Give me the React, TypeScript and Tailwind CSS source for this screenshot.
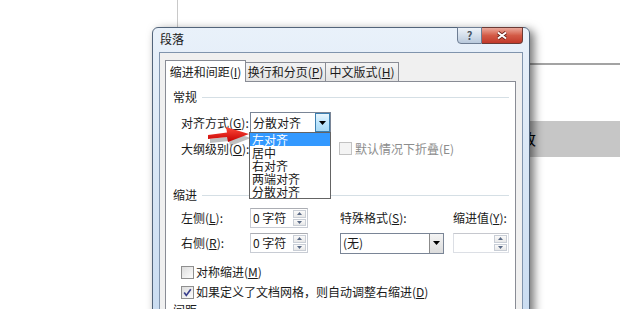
import type { ReactNode } from "react";

function K({ k }: { k: string }) {
  return <span className="underline underline-offset-[1px]">{k}</span>;
}

function GroupHeader({ title }: { title: string }) {
  return (
    <div className="flex h-[16px] items-center gap-[5px] pl-[7px] pr-[6px]">
      <span>{title}</span>
      <div className="h-px flex-1 bg-[#d5dfe5]" />
    </div>
  );
}

function DownTriangle() {
  return (
    <svg width="7" height="4" viewBox="0 0 7 4">
      <polygon points="0,0 7,0 3.5,4" fill="#000" />
    </svg>
  );
}

function Combo({
  value,
  hot,
  className,
  children,
}: {
  value?: string;
  hot?: boolean;
  className: string;
  children?: ReactNode;
}) {
  return (
    <div
      className={`relative flex h-[21px] items-stretch border border-[#7a8596] bg-white ${className}`}
    >
      <span className="flex-1 self-center pl-[2px]">{value}</span>
      <div
        className={
          hot
            ? "flex w-[15px] items-center justify-center border border-[#3c7fb1] bg-gradient-to-b from-[#eaf6fd] via-[#bee6fd] to-[#a7d9f5]"
            : "flex w-[14px] items-center justify-center border-l border-[#8b8b8b] bg-gradient-to-b from-[#f4f4f4] to-[#dcdcdc]"
        }
      >
        <DownTriangle />
      </div>
      {children}
    </div>
  );
}

function SpinArrow({ up }: { up?: boolean }) {
  return (
    <svg width="5" height="3" viewBox="0 0 5 3">
      <polygon points={up ? "0,3 5,3 2.5,0" : "0,0 5,0 2.5,3"} fill="#5a6a86" />
    </svg>
  );
}

function Spin({ value, className }: { value?: string; className: string }) {
  return (
    <div
      className={`flex h-[20px] items-stretch border border-[#c8ccd4] border-t-[#abadb3] bg-white ${className}`}
    >
      <span className="flex-1 self-center pl-[2px]">{value}</span>
      <div className="flex w-[15px] flex-col gap-px p-px">
        <div className="flex flex-1 items-center justify-center border border-[#c9ced6] bg-gradient-to-b from-[#fafafa] to-[#e8e8e8]">
          <SpinArrow up />
        </div>
        <div className="flex flex-1 items-center justify-center border border-[#c9ced6] bg-gradient-to-b from-[#fafafa] to-[#e8e8e8]">
          <SpinArrow />
        </div>
      </div>
    </div>
  );
}

function Checkbox({ checked, disabled }: { checked?: boolean; disabled?: boolean }) {
  return (
    <div
      className={
        disabled
          ? "flex h-[13px] w-[13px] items-center justify-center border border-[#c2c2c2] bg-[#f4f4f4]"
          : "flex h-[13px] w-[13px] items-center justify-center border border-[#8f8f8f] bg-gradient-to-br from-[#dcdcdc] to-[#fdfdfd]"
      }
    >
      {checked && (
        <svg width="11" height="11" viewBox="0 0 11 11">
          <path d="M2.2 5.6 L4.3 8.4 L8.8 2.2" fill="none" stroke="#3a3f8c" strokeWidth="1.7" />
        </svg>
      )}
    </div>
  );
}

const ALIGN_OPTIONS = ["左对齐", "居中", "右对齐", "两端对齐", "分散对齐"];

export default function App() {
  return (
    <div className="relative h-[309px] w-[620px] overflow-hidden bg-white font-['Noto_Sans_CJK_SC','Noto_Sans',sans-serif] text-[12px] leading-[16px] text-[#1a1a1a]">
      {/* document behind the dialog */}
      <div className="absolute left-[177px] top-0 h-[30px] w-px bg-[#c9c9c9]" />
      <div className="absolute left-[520px] top-[63px] h-[2px] w-[100px] bg-[#a3a3a3]" />
      <div className="absolute left-[520px] top-[121px] flex h-[36px] w-[100px] items-center bg-[#c6c6c6] pl-[1px] text-[15px] text-black">
        改
      </div>

      {/* dialog window */}
      <div className="absolute left-[152px] top-[27px] flex h-[300px] w-[378px] flex-col rounded-t-[6px] border border-[#52647a] bg-gradient-to-b from-[#e9f1fa] via-[#d8e6f5] to-[#c9dcf1] shadow-[4px_3px_10px_rgba(0,0,0,0.55)]">
        <div className="flex h-[24px] items-start">
          <span className="pl-[7px] pt-[3px]">段落</span>
          <div className="-mt-px ml-auto mr-[6px] flex">
            <div className="flex h-[17px] w-[25px] items-center justify-center rounded-bl-[4px] border border-[#6d7d93] bg-gradient-to-b from-[#eef3f9] via-[#d4dfeb] to-[#b9c9dc] text-[11px] font-bold leading-none text-[#4b5563]">
              ?
            </div>
            <div className="flex h-[17px] w-[41px] items-center justify-center rounded-br-[4px] border border-l-0 border-[#6b3a35] bg-gradient-to-b from-[#eaa89b] via-[#d35a46] to-[#c1382a]">
              <svg width="12" height="9" viewBox="0 0 12 9">
                <path d="M2 1.5 L10 7.5 M10 1.5 L2 7.5" stroke="#6b231a" strokeWidth="3.6" />
                <path d="M2 1.5 L10 7.5 M10 1.5 L2 7.5" stroke="#ffffff" strokeWidth="2" />
              </svg>
            </div>
          </div>
        </div>

        <div className="mx-[6px] flex flex-1 flex-col border-x border-t border-[#8094ad] bg-[#f0f0f0]">
          {/* tabs */}
          <div className="flex h-[28px] items-end pl-[5px]">
            <div className="relative z-10 -mb-px flex h-[22px] w-[81px] items-center justify-center border-x border-t border-[#898c95] bg-white">
              缩进和间距(<K k="I" />)
            </div>
            <div className="flex h-[19px] w-[80px] items-center justify-center border-r border-t border-[#898c95] bg-gradient-to-b from-[#f4f4f4] to-[#e3e3e3]">
              换行和分页(<K k="P" />)
            </div>
            <div className="flex h-[19px] w-[73px] items-center justify-center border-r border-t border-[#898c95] bg-gradient-to-b from-[#f4f4f4] to-[#e3e3e3]">
              中文版式(<K k="H" />)
            </div>
          </div>

          {/* tab page */}
          <div className="ml-[5px] w-[351px] flex-1 border border-[#898c95] bg-white pt-[7px]">
            <GroupHeader title="常规" />

            <div className="mt-[7px] flex h-[21px] items-center pl-[15px]">
              <span className="w-[69px]">
                对齐方式(<K k="G" />):
              </span>
              <Combo value="分散对齐" hot className="z-20 w-[81px]">
                <div className="absolute left-[-2px] top-full w-[82px] border border-[#646464] bg-white">
                  {ALIGN_OPTIONS.map((opt, i) => (
                    <div
                      key={opt}
                      className={
                        i === 0
                          ? "h-[13px] bg-[#3399ff] pl-[2px] leading-[13px] text-white"
                          : "h-[13px] pl-[2px] leading-[13px]"
                      }
                    >
                      {opt}
                    </div>
                  ))}
                </div>
              </Combo>
            </div>

            <div className="mt-[5px] flex h-[21px] items-center pl-[15px]">
              <span className="w-[69px]">
                大纲级别(<K k="O" />):
              </span>
              <Combo className="w-[81px]" />
              <div className="ml-[8px] flex items-center gap-[3px] text-[#8d8d8d]">
                <Checkbox disabled />
                <span>默认情况下折叠(E)</span>
              </div>
            </div>

            <div className="mt-[28px]">
              <GroupHeader title="缩进" />
            </div>

            <div className="mt-[5px] flex h-[20px] items-center pl-[15px]">
              <span className="w-[69px]">
                左侧(<K k="L" />):
              </span>
              <Spin value="0 字符" className="w-[58px]" />
              <span className="ml-[32px] w-[113px]">
                特殊格式(<K k="S" />):
              </span>
              <span>
                缩进值(<K k="Y" />):
              </span>
            </div>

            <div className="mt-[5px] flex h-[20px] items-center pl-[15px]">
              <span className="w-[69px]">
                右侧(<K k="R" />):
              </span>
              <Spin value="0 字符" className="w-[58px]" />
              <Combo value="(无)" className="ml-[32px] w-[104px]" />
              <Spin className="ml-[9px] w-[56px] border-[#dcdfe5] border-t-[#c6c8ce]" />
            </div>

            <div className="mt-[9px] flex h-[20px] items-center gap-[2px] pl-[15px]">
              <Checkbox />
              <span>
                对称缩进(<K k="M" />)
              </span>
            </div>
            <div className="flex h-[20px] items-center gap-[2px] pl-[15px]">
              <Checkbox checked />
              <span>
                如果定义了文档网格，则自动调整右缩进(<K k="D" />)
              </span>
            </div>

            <GroupHeader title="间距" />
          </div>
        </div>
      </div>

      {/* red pointer arrow */}
      <svg
        className="absolute left-[206px] top-[124px]"
        width="46"
        height="24"
        viewBox="0 0 46 24"
      >
        <defs>
          <linearGradient id="arrowRed" x1="0" y1="0" x2="0" y2="1">
            <stop offset="0" stopColor="#ff4a3a" />
            <stop offset="1" stopColor="#c40000" />
          </linearGradient>
        </defs>
        <polygon
          points="3,13 22,10.5 21,5 44,12 23,20 22,15 3,17"
          fill="#000"
          opacity="0.25"
          transform="translate(1,2)"
        />
        <polygon points="2,11 21,8.5 20,3 43,10 22,18 21,13 2,15" fill="url(#arrowRed)" />
      </svg>
    </div>
  );
}
